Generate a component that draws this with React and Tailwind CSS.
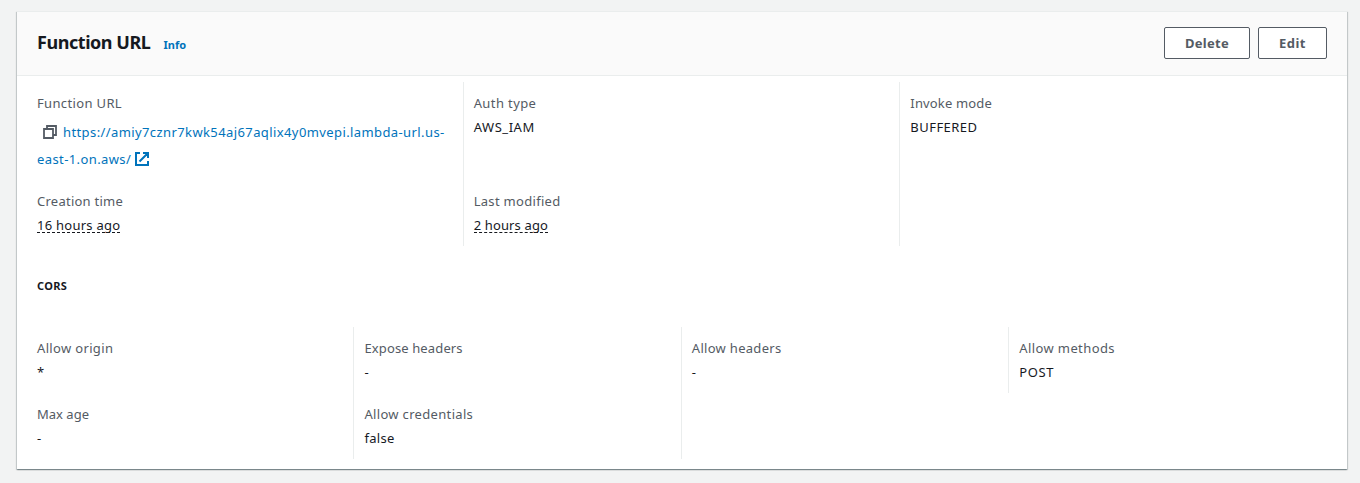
import React from "react";

function Field({ label, last, tracking = "", children }) {
  return (
    <div className={"whitespace-nowrap px-2.5 py-2.5 " + (last ? "" : "border-r border-[#eaeded]")}>
      <div className={"text-[#545b64] " + tracking}>{label}</div>
      <div className="mt-0.5">{children}</div>
    </div>
  );
}

function Ago({ className = "", children }) {
  return (
    <span className={"inline-block h-[19px] border-b border-dashed border-[#16191f] align-top " + className}>
      {children}
    </span>
  );
}

function CopyIcon() {
  return (
    <svg className="mr-1.5 ml-1.5 inline-block size-3.5 align-[-2px]" viewBox="0 0 14 14" fill="none" stroke="#545b64" strokeWidth="1.8">
      <path d="M1 4h9v9H1z" />
      <path d="M4 4V1h9v9h-3" />
    </svg>
  );
}

function ExternalIcon() {
  return (
    <svg className="ml-1 inline-block size-3.5 align-[-2px]" viewBox="0 0 14 14" fill="none" stroke="#0073bb" strokeWidth="2">
      <path d="M5 1H1v12h12V9M8 1h5v5M13 1L4.500 9.500" />
    </svg>
  );
}

export default function App() {
  return (
    <div className="h-[483px] bg-[#f2f3f3] pt-[11px] pr-[13px] pl-[17px] font-['Noto_Sans','Open_Sans',sans-serif] text-[13px] leading-[22px] text-[#16191f]">
      <section className="h-[458px] border-t border-[#eaeded] bg-white shadow-[0_1px_1px_0_rgba(0,28,36,0.3),1px_1px_1px_0_rgba(0,28,36,0.15),-1px_1px_1px_0_rgba(0,28,36,0.15)]">
        <header className="flex h-16 items-start justify-between border-b border-[#eaeded] bg-[#fafafa] px-5 pt-[15px]">
          <div className="flex items-baseline pt-1">
            <h2 className="text-[18px] font-bold tracking-[-0.45px]">Function URL</h2>
            <a className="ml-[13px] text-[11px] font-bold text-[#0073bb]">Info</a>
          </div>
          <div className="flex gap-2 font-bold text-[#545b64]">
            <button className="h-8 w-[86px] rounded-[2px] border border-[#545b64] bg-white tracking-[0.25px]">Delete</button>
            <button className="h-8 w-[69px] rounded-[2px] border border-[#545b64] bg-white tracking-[0.45px]">Edit</button>
          </div>
        </header>
        <div className="grid grid-cols-3 grid-rows-[98px_66px] px-2.5 pt-1.5">
          <Field label="Function URL" tracking="tracking-[0.35px]">
            <div className="pt-[3px] leading-[27px] tracking-[0.4px] text-[#0073bb]">
              <div><CopyIcon />https://amiy7cznr7kwk54aj67aqlix4y0mvepi.lambda-url.us-</div>
              <div>east-1.on.aws/<ExternalIcon /></div>
            </div>
          </Field>
          <Field label="Auth type" tracking="tracking-[0.4px]"><span className="tracking-[0.55px]">AWS_IAM</span></Field>
          <Field label="Invoke mode" tracking="tracking-[0.15px]" last><span className="tracking-[0.45px]">BUFFERED</span></Field>
          <Field label="Creation time" tracking="tracking-[0.25px]"><Ago className="tracking-[0.25px]">16 hours ago</Ago></Field>
          <Field label="Last modified" tracking="tracking-[0.3px]"><Ago className="tracking-[0.14px]">2 hours ago</Ago></Field>
        </div>
        <h3 className="mt-[29px] px-5 text-[11px] font-bold tracking-[0.3px]">CORS</h3>
        <div className="mt-[30px] grid grid-cols-4 grid-rows-[66px_66px] pr-[10.4px] pl-2.5">
          <Field label="Allow origin" tracking="tracking-[0.34px]">*</Field>
          <Field label="Expose headers" tracking="tracking-[0.13px]">-</Field>
          <Field label="Allow headers" tracking="tracking-[0.3px]">-</Field>
          <Field label="Allow methods" tracking="tracking-[0.4px]" last><span className="tracking-[0.6px]">POST</span></Field>
          <Field label="Max age">-</Field>
          <Field label="Allow credentials" tracking="tracking-[0.33px]"><span className="tracking-[0.3px]">false</span></Field>
        </div>
      </section>
    </div>
  );
}
